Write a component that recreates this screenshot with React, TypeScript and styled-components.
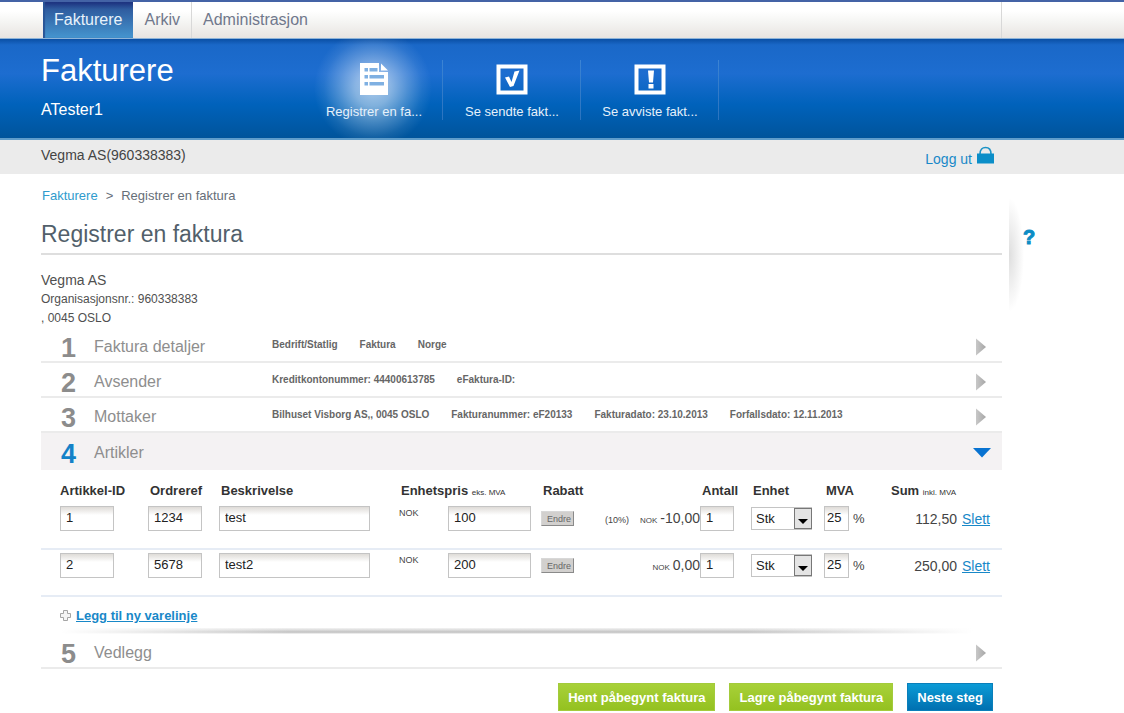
import React from 'react';
import styled, { createGlobalStyle, css } from 'styled-components';

const sans = '"Liberation Sans", Arial, Helvetica, sans-serif';

const GlobalStyle = createGlobalStyle`
  *, *::before, *::after { box-sizing: border-box; }
  body {
    margin: 0;
    background: #fff;
    color: #444;
    font-family: ${sans};
    font-size: 13px;
  }
  button, input, select { font-family: inherit; margin: 0; }
  a { color: #1888c8; }
`;

const frame = css`
  margin-left: 41px;
  width: calc(100% - 41px);
  max-width: 961px;
`;

const TopBar = styled.div`
  border-top: 2px solid #4463a6;
  border-bottom: 1px solid #8fb4d8;
  background: linear-gradient(#fff 25%, #f5f5f3 55%, #e8e4e1);
`;

const TabList = styled.nav`
  ${frame}
  display: flex;
  height: 36px;
  padding-left: 2px;
  border-right: 1px solid #d8d8d8;
`;

const Tab = styled.a<{ $active?: boolean; $divided?: boolean }>`
  display: flex;
  align-items: center;
  padding: 0 11px;
  font-size: 16px;
  text-decoration: none;
  color: #70788c;
  ${(p) => p.$divided && 'border-right: 1px solid #d8d8d8;'}
  ${(p) =>
    p.$active &&
    css`
      color: #e8f2fb;
      background: linear-gradient(#1c2f7d, #2f5c9f 20%, #4595cf);
      box-shadow: inset 2px 0 1px #2a5597;
    `}
`;

const Hero = styled.header`
  background: linear-gradient(#0a4fa4, #1a68c8 6%, #1d6dd0 35%, #0062bb 66%, #00549b);
  border-bottom: 2px solid #5f9dcb;
`;

const HeroInner = styled.div`
  ${frame}
  display: flex;
  height: 99px;
`;

const Brand = styled.div`
  width: 264px;
  padding-top: 14px;
  color: #fff;
`;

const BrandTitle = styled.div`
  font-size: 31px;
  line-height: 36px;
`;

const BrandUser = styled.div`
  margin-top: 11px;
  font-size: 16px;
  line-height: 20px;
`;

const HeroNav = styled.nav`
  display: flex;
`;

const HeroLink = styled.a<{ $active?: boolean }>`
  display: flex;
  flex-direction: column;
  align-items: center;
  width: 138px;
  padding-top: 23px;
  color: #e6f1fb;
  font-size: 13px;
  text-decoration: none;
  background:
    linear-gradient(#3c84d4, #2b74bf) right 21px / 1px 60px no-repeat
    ${(p) =>
      p.$active &&
      `, radial-gradient(circle at 68px 49px, rgba(255,255,255,.64), rgba(255,255,255,.5) 18px, rgba(255,255,255,.26) 35px, rgba(255,255,255,.08) 49px, rgba(255,255,255,0) 59px)`};
`;

const HeroLabel = styled.span`
  margin-top: 6px;
  line-height: 20px;
`;

const AccountBar = styled.div`
  background: #ebebeb;
`;

const AccountInner = styled.div`
  ${frame}
  display: flex;
  justify-content: space-between;
  height: 34px;
  padding: 5px 8px 0 0;
  font-size: 14px;
  line-height: 20px;
`;

const Logout = styled.a`
  display: flex;
  gap: 5px;
  height: 26px;
  padding-top: 4px;
  text-decoration: none;
  svg { margin-top: -3px; }
`;

const Content = styled.div`
  display: flex;
`;

const Main = styled.main`
  flex: 1;
  min-width: 0;
  max-width: 1002px;
  padding-left: 41px;
`;

const Breadcrumb = styled.nav`
  display: flex;
  gap: 8px;
  padding: 12px 0 0 1px;
  line-height: 20px;
  color: #666e78;
  a { text-decoration: none; color: #2f9bcd; }
`;

const PageTitle = styled.h1`
  margin: 13px 0 0;
  padding-bottom: 4px;
  border-bottom: 2px solid #dedede;
  color: #525f6b;
  font-size: 23px;
  font-weight: 400;
  line-height: 30px;
`;

const Sender = styled.address`
  padding-top: 16px;
  font-style: normal;
  font-size: 12px;
  line-height: 19px;
  color: #505050;
`;

const SenderName = styled.div`
  font-size: 14px;
`;

const Step = styled.button<{ $open?: boolean }>`
  display: flex;
  align-items: center;
  width: 100%;
  height: ${(p) => (p.$open ? 37 : 35)}px;
  padding: 4px 11px 0 20px;
  border: 0;
  border-bottom: 2px solid ${(p) => (p.$open ? '#f4f2f3' : '#ebebeb')};
  background: ${(p) => (p.$open ? '#f4f2f3' : '#fff')};
  text-align: left;
`;

const StepNumber = styled.span<{ $open?: boolean }>`
  width: 33px;
  padding-top: 3px;
  font-size: 27px;
  font-weight: 700;
  line-height: 26px;
  color: ${(p) => (p.$open ? '#1482c8' : '#8c8c8c')};
`;

const StepName = styled.span`
  width: 178px;
  font-size: 16px;
  line-height: 20px;
  color: #8e8e8e;
`;

const StepFacts = styled.span`
  display: flex;
  flex: 1;
  gap: 22px;
  padding-bottom: 4px;
  font-size: 10px;
  font-weight: 700;
  line-height: 16px;
  white-space: nowrap;
  color: #666;
`;

const Lines = styled.table`
  width: 100%;
  table-layout: fixed;
  border-collapse: separate;
  border-spacing: 0;
  th {
    height: 33px;
    padding: 7px 0 0 2px;
    text-align: left;
    white-space: nowrap;
    font-size: 13px;
    color: #333;
  }
  td {
    height: 47px;
    padding: 3px 0 0;
    vertical-align: top;
    border-bottom: 2px solid #e6ecf5;
  }
  tr > :first-child { padding-left: 19px; }
`;

const Small = styled.small`
  font-size: 8px;
  font-weight: 400;
`;

const Field = styled.input<{ $w: number; $tight?: boolean }>`
  display: block;
  width: ${(p) => p.$w}px;
  height: 25px;
  padding: 0 ${(p) => (p.$tight ? 2 : 5)}px 2px;
  border: 1px solid #c4c4c4;
  background: linear-gradient(#dedbd7, #fff 35%);
  font-size: 13px;
  color: #222;
`;

const Cell = styled.div<{ $gap?: number }>`
  display: flex;
  align-items: center;
  gap: ${(p) => p.$gap ?? 0}px;
  height: 25px;
`;

const PriceCurrency = styled.span`
  width: 49px;
  padding-bottom: 12px;
  font-size: 9px;
`;

const Discount = styled(Cell)`
  justify-content: space-between;
`;

const DiscountValue = styled.span`
  display: flex;
  align-items: baseline;
  gap: 3px;
  padding-bottom: 2px;
`;

const DiscountRate = styled.span`
  margin-right: 8px;
  font-size: 9px;
`;

const ChangeButton = styled.button`
  width: 33px;
  height: 15px;
  padding: 0 0 0 3px;
  border: 1px solid;
  border-color: #d8d8d8 #8a8a8a #8a8a8a #d8d8d8;
  background: #d2d0ce;
  color: #666;
  font-size: 9px;
  line-height: 12px;
`;

const SelectBox = styled.span`
  position: relative;
  display: block;
  width: 61px;
  height: 23px;
  svg {
    position: absolute;
    top: 1px;
    right: 0;
    pointer-events: none;
  }
`;

const Select = styled.select`
  appearance: none;
  width: 100%;
  height: 100%;
  padding: 0 18px 0 4px;
  border: 1px solid #c4c4c4;
  border-radius: 0;
  background: #fff;
  font-size: 13px;
  color: #222;
`;

const Amount = styled.span`
  font-size: 14px;
`;

const SumValue = styled(Amount)`
  width: 68px;
  text-align: right;
`;

const DeleteLink = styled.a`
  font-size: 14px;
`;

const AddLine = styled.div`
  display: flex;
  align-items: center;
  gap: 5px;
  height: 31px;
  padding: 6px 0 0 19px;
  a { font-size: 13px; font-weight: 700; }
`;

const Divider = styled.div`
  height: 6px;
  margin: 0 29px 0 20px;
  background:
    linear-gradient(90deg, #fff, transparent 25%, transparent 75%, #fff),
    linear-gradient(#f4f4f4, #c8c8c8 60%, #cdcdcd 80%, #fff);
`;

const Actions = styled.div`
  display: flex;
  justify-content: flex-end;
  gap: 14px;
  padding: 14px 9px 0 0;
`;

const ActionButton = styled.button<{ $primary?: boolean }>`
  height: 28px;
  padding: 0 9px;
  border: 1px solid ${(p) => (p.$primary ? '#0a7fba' : '#a3cb3b')};
  background: ${(p) =>
    p.$primary ? 'linear-gradient(#0b9bd6, #0070b0)' : 'linear-gradient(#a8d139, #94c120)'};
  color: #fff;
  font-size: 13px;
  font-weight: 700;
`;

const Help = styled.aside`
  width: 60px;
  height: 114px;
  margin: 24px 0 0 7px;
  padding: 27px 0 0 14px;
  background: radial-gradient(ellipse 15px 57px at 0 50%, #dedede, #fff) no-repeat;
`;

const HelpButton = styled.button`
  padding: 0;
  border: 0;
  background: none;
  color: #0d8cc4;
  font-size: 20px;
  font-weight: 700;
  line-height: 24px;
  -webkit-text-stroke: 1px #0d8cc4;
`;

const DocumentIcon = () => (
  <svg width="30" height="34" viewBox="0 0 30 34" aria-hidden="true">
    <path d="M1 1H20V10H29V33H1Z" fill="#fff" />
    <path d="M22 1.500L29 8.500H22Z" fill="#fff" />
    <path d="M5.500 6h3.500v3.500H5.500zM10.500 6H18.500v3.500h-8zM5.500 13h3.500v3.500H5.500zM10.500 13H25v3.500H10.500zM5.500 20h3.500v3.500H5.500zM10.500 20H25v3.500H10.500z" fill="#7fb0e2" />
  </svg>
);

const CheckIcon = () => (
  <svg width="32" height="34" viewBox="0 0 32 34" aria-hidden="true">
    <rect x="2.500" y="4.500" width="27" height="26" fill="none" stroke="#fff" strokeWidth="4" />
    <path d="M9 15.500l4-1 2.500 5.500L18.500 9.500 23.500 8.500 17.500 24 14 25Z" fill="#fff" />
  </svg>
);

const AlertIcon = () => (
  <svg width="32" height="34" viewBox="0 0 32 34" aria-hidden="true">
    <rect x="2.500" y="4.500" width="27" height="26" fill="none" stroke="#fff" strokeWidth="4" />
    <path d="M14 8.500h6l-1 12h-4zM14.500 22h5V26.500h-5z" fill="#fff" />
  </svg>
);

const LockIcon = () => (
  <svg width="17" height="18" viewBox="0 0 17 18" aria-hidden="true">
    <path d="M3 8C3 3.500 5.500 1.500 8.500 1.500S14 3.500 14 8" fill="none" stroke="#1c93c6" strokeWidth="1.600" />
    <path d="M0 7.500h17v10H0z" fill="#0b8ec8" />
  </svg>
);

const ArrowRight = () => (
  <svg width="18" height="18" viewBox="0 0 18 18" aria-hidden="true">
    <defs>
      <linearGradient id="arrowShade" x1="0" x2="1">
        <stop offset="0" stopColor="#c8c8c8" />
        <stop offset="1" stopColor="#a6a6a6" />
      </linearGradient>
    </defs>
    <path d="M3 0.500L13 9 3 17.500Z" fill="url(#arrowShade)" />
  </svg>
);

const ArrowDown = () => (
  <svg width="18" height="18" viewBox="0 0 18 18" aria-hidden="true">
    <path d="M0 4H18L9 13.500Z" fill="#0873d1" />
  </svg>
);

const PlusIcon = () => (
  <svg width="11" height="11" viewBox="0 0 11 11" aria-hidden="true">
    <path d="M3.500 .5h4v3h3v4h-3v3h-4v-3h-3v-4h3z" fill="#f4f4f4" stroke="#a5a5a5" />
  </svg>
);

const SelectArrow = () => (
  <svg width="18" height="21" viewBox="0 0 18 21" aria-hidden="true">
    <rect x=".5" y=".5" width="17" height="20" fill="#e4e4e4" stroke="#777" />
    <path d="M4 11h10l-5 5z" fill="#000" />
  </svg>
);

const StepRow = ({ n, name, facts = [], open }: { n: number; name: string; facts?: string[]; open?: boolean }) => (
  <Step type="button" $open={open} aria-expanded={!!open}>
    <StepNumber $open={open}>{n}</StepNumber>
    <StepName>{name}</StepName>
    <StepFacts>
      {facts.map((f) => (
        <span key={f}>{f}</span>
      ))}
    </StepFacts>
    {open ? <ArrowDown /> : <ArrowRight />}
  </Step>
);

const lines = [
  { id: '1', ref: '1234', text: 'test', price: '100', rate: '(10%)', discount: '-10,00', count: '1', vat: '25', sum: '112,50' },
  { id: '2', ref: '5678', text: 'test2', price: '200', rate: '', discount: '0,00', count: '1', vat: '25', sum: '250,00' },
];

const columnWidths = [107, 71, 180, 142, 159, 51, 73, 65, 113];

export default function App() {
  return (
    <>
      <GlobalStyle />
      <TopBar>
        <TabList>
          <Tab href="#fakturere" $active>Fakturere</Tab>
          <Tab href="#arkiv" $divided>Arkiv</Tab>
          <Tab href="#administrasjon">Administrasjon</Tab>
        </TabList>
      </TopBar>
      <Hero>
        <HeroInner>
          <Brand>
            <BrandTitle>Fakturere</BrandTitle>
            <BrandUser>ATester1</BrandUser>
          </Brand>
          <HeroNav>
            <HeroLink href="#registrer" $active>
              <DocumentIcon />
              <HeroLabel>Registrer en fa...</HeroLabel>
            </HeroLink>
            <HeroLink href="#sendte">
              <CheckIcon />
              <HeroLabel>Se sendte fakt...</HeroLabel>
            </HeroLink>
            <HeroLink href="#avviste">
              <AlertIcon />
              <HeroLabel>Se avviste fakt...</HeroLabel>
            </HeroLink>
          </HeroNav>
        </HeroInner>
      </Hero>
      <AccountBar>
        <AccountInner>
          <span>Vegma AS(960338383)</span>
          <Logout href="#loggut">
            Logg ut
            <LockIcon />
          </Logout>
        </AccountInner>
      </AccountBar>
      <Content>
        <Main>
          <Breadcrumb>
            <a href="#fakturere">Fakturere</a>
            <span>&gt;</span>
            <span>Registrer en faktura</span>
          </Breadcrumb>
          <PageTitle>Registrer en faktura</PageTitle>
          <Sender>
            <SenderName>Vegma AS</SenderName>
            <div>Organisasjonsnr.: 960338383</div>
            <div>, 0045 OSLO</div>
          </Sender>
          <StepRow n={1} name="Faktura detaljer" facts={['Bedrift/Statlig', 'Faktura', 'Norge']} />
          <StepRow n={2} name="Avsender" facts={['Kreditkontonummer: 44400613785', 'eFaktura-ID:']} />
          <StepRow
            n={3}
            name="Mottaker"
            facts={['Bilhuset Visborg AS,, 0045 OSLO', 'Fakturanummer: eF20133', 'Fakturadato: 23.10.2013', 'Forfallsdato: 12.11.2013']}
          />
          <StepRow n={4} name="Artikler" open />
          <Lines>
            <colgroup>
              {columnWidths.map((w, i) => (
                <col key={i} width={w} />
              ))}
            </colgroup>
            <thead>
              <tr>
                <th>Artikkel-ID</th>
                <th>Ordreref</th>
                <th>Beskrivelse</th>
                <th>Enhetspris <Small>eks. MVA</Small></th>
                <th>Rabatt</th>
                <th>Antall</th>
                <th>Enhet</th>
                <th>MVA</th>
                <th>Sum <Small>inkl. MVA</Small></th>
              </tr>
            </thead>
            <tbody>
              {lines.map((l) => (
                <tr key={l.id}>
                  <td><Field $w={54} aria-label="Artikkel-ID" defaultValue={l.id} /></td>
                  <td><Field $w={54} aria-label="Ordreref" defaultValue={l.ref} /></td>
                  <td><Field $w={151} aria-label="Beskrivelse" defaultValue={l.text} /></td>
                  <td>
                    <Cell>
                      <PriceCurrency>NOK</PriceCurrency>
                      <Field $w={83} aria-label="Enhetspris" defaultValue={l.price} />
                    </Cell>
                  </td>
                  <td>
                    <Discount>
                      <ChangeButton type="button">Endre</ChangeButton>
                      <DiscountValue>
                        {l.rate && <DiscountRate>{l.rate}</DiscountRate>}
                        <Small>NOK</Small>
                        <Amount>{l.discount}</Amount>
                      </DiscountValue>
                    </Discount>
                  </td>
                  <td><Field $w={34} aria-label="Antall" defaultValue={l.count} /></td>
                  <td>
                    <Cell>
                      <SelectBox>
                        <Select aria-label="Enhet" defaultValue="Stk">
                          <option>Stk</option>
                        </Select>
                        <SelectArrow />
                      </SelectBox>
                    </Cell>
                  </td>
                  <td>
                    <Cell $gap={4}>
                      <Field $w={25} $tight aria-label="MVA" defaultValue={l.vat} />
                      <span>%</span>
                    </Cell>
                  </td>
                  <td>
                    <Cell $gap={5}>
                      <SumValue>{l.sum}</SumValue>
                      <DeleteLink href="#slett">Slett</DeleteLink>
                    </Cell>
                  </td>
                </tr>
              ))}
            </tbody>
          </Lines>
          <AddLine>
            <PlusIcon />
            <a href="#ny">Legg til ny varelinje</a>
          </AddLine>
          <Divider />
          <StepRow n={5} name="Vedlegg" />
          <Actions>
            <ActionButton type="button">Hent påbegynt faktura</ActionButton>
            <ActionButton type="button">Lagre påbegynt faktura</ActionButton>
            <ActionButton type="button" $primary>Neste steg</ActionButton>
          </Actions>
        </Main>
        <Help>
          <HelpButton type="button" aria-label="Hjelp">?</HelpButton>
        </Help>
      </Content>
    </>
  );
}
